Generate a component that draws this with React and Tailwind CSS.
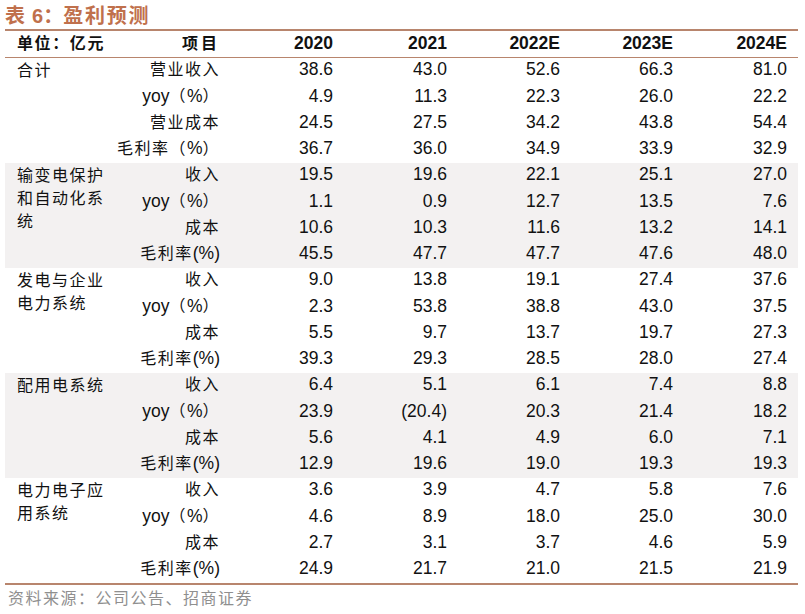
import React from "react";

const FONT = '"Liberation Sans", "Noto Sans CJK SC", sans-serif';

const sections = [
  {
    label: ["合计"],
    gray: false,
    rows: [
      ["营业收入", ["38.6", "43.0", "52.6", "66.3", "81.0"]],
      ["yoy（%）", ["4.9", "11.3", "22.3", "26.0", "22.2"]],
      ["营业成本", ["24.5", "27.5", "34.2", "43.8", "54.4"]],
      ["毛利率（%）", ["36.7", "36.0", "34.9", "33.9", "32.9"]],
    ],
  },
  {
    label: ["输变电保护", "和自动化系", "统"],
    gray: true,
    rows: [
      ["收入", ["19.5", "19.6", "22.1", "25.1", "27.0"]],
      ["yoy（%）", ["1.1", "0.9", "12.7", "13.5", "7.6"]],
      ["成本", ["10.6", "10.3", "11.6", "13.2", "14.1"]],
      ["毛利率(%)", ["45.5", "47.7", "47.7", "47.6", "48.0"]],
    ],
  },
  {
    label: ["发电与企业", "电力系统"],
    gray: false,
    rows: [
      ["收入", ["9.0", "13.8", "19.1", "27.4", "37.6"]],
      ["yoy（%）", ["2.3", "53.8", "38.8", "43.0", "37.5"]],
      ["成本", ["5.5", "9.7", "13.7", "19.7", "27.3"]],
      ["毛利率(%)", ["39.3", "29.3", "28.5", "28.0", "27.4"]],
    ],
  },
  {
    label: ["配用电系统"],
    gray: true,
    rows: [
      ["收入", ["6.4", "5.1", "6.1", "7.4", "8.8"]],
      ["yoy（%）", ["23.9", "(20.4)", "20.3", "21.4", "18.2"]],
      ["成本", ["5.6", "4.1", "4.9", "6.0", "7.1"]],
      ["毛利率(%)", ["12.9", "19.6", "19.0", "19.3", "19.3"]],
    ],
  },
  {
    label: ["电力电子应", "用系统"],
    gray: false,
    rows: [
      ["收入", ["3.6", "3.9", "4.7", "5.8", "7.6"]],
      ["yoy（%）", ["4.6", "8.9", "18.0", "25.0", "30.0"]],
      ["成本", ["2.7", "3.1", "3.7", "4.6", "5.9"]],
      ["毛利率(%)", ["24.9", "21.7", "21.0", "21.5", "21.9"]],
    ],
  },
];

// split text into CJK / non-CJK runs so CJK gets its own size + spacing
function Mixed({ text }) {
  const parts = [];
  const re = /([\u3000-\u303f\u4e00-\u9fff\uff00-\uffef]+)|([^\u3000-\u303f\u4e00-\u9fff\uff00-\uffef]+)/g;
  let m;
  let i = 0;
  while ((m = re.exec(text))) {
    if (m[1]) {
      parts.push(
        <span key={i++} className="text-[16px] tracking-[1.5px]">
          {m[1]}
        </span>
      );
    } else {
      parts.push(<span key={i++}>{m[2]}</span>);
    }
  }
  return <>{parts}</>;
}

const GRID =
  "grid grid-cols-[115px_100px_113px_114px_113px_113px_114px] pr-[11px]";

function Section({ s }) {
  return (
    <div
      className={`${GRID} grid-rows-[repeat(4,26.25px)] ${
        s.gray ? "bg-[#f3f1f1]" : "bg-white"
      }`}
    >
      <div className="row-span-4 col-start-1 row-start-1 pl-[12px] pt-[1px] leading-[23px] text-[16px] tracking-[1.5px] text-[#111]">
        {s.label.map((l, i) => (
          <div key={i}>{l}</div>
        ))}
      </div>
      {s.rows.map((r, ri) => (
        <React.Fragment key={ri}>
          <div
            className="col-start-2 flex items-center justify-end pb-[2px] whitespace-nowrap text-[#111]"
            style={{ gridRowStart: ri + 1 }}
          >
            <Mixed text={r[0]} />
          </div>
          {r[1].map((v, vi) => (
            <div
              key={vi}
              className="flex items-center justify-end pb-[2px] text-[#111]"
              style={{ gridRowStart: ri + 1, gridColumnStart: vi + 3 }}
            >
              {v}
            </div>
          ))}
        </React.Fragment>
      ))}
    </div>
  );
}

export default function App() {
  return (
    <div
      className="w-[805px] h-[614px] bg-white text-[17.5px] leading-none"
      style={{ fontFamily: FONT }}
    >
      <div className="h-[29px] pl-[5px] pt-[5px] flex items-start text-[#c0704c] font-bold text-[20px] leading-[22px] whitespace-nowrap">
        <span className="tracking-[1px]">表</span>
        <span className="ml-[6px]">6</span>
        <span>：</span>
        <span className="tracking-[1.8px]">盈利预测</span>
      </div>
      <div className="mx-[5px] w-[793px] border-t-2 border-b-2 border-[#b8856d]">
        <div
          className={`${GRID} h-[27px] border-b border-[#b8856d] font-bold text-[#111]`}
        >
          <div className="pl-[12px] flex items-center pb-[1px] text-[16px] tracking-[1.6px] whitespace-nowrap">
            单位：亿元
          </div>
          <div className="flex items-center justify-end pr-[3px] pb-[1px] text-[16px] whitespace-nowrap">
            <span>项</span>
            <span className="ml-[3px]">目</span>
          </div>
          {["2020", "2021", "2022E", "2023E", "2024E"].map((y) => (
            <div key={y} className="flex items-center justify-end pb-[1px]">
              {y}
            </div>
          ))}
        </div>
        {sections.map((s, i) => (
          <Section key={i} s={s} />
        ))}
      </div>
      <div className="pl-[8px] pt-[5px] text-[16px] tracking-[1.5px] text-[#8f8f8f] leading-[18px]">
        资料来源：公司公告、招商证券
      </div>
    </div>
  );
}
